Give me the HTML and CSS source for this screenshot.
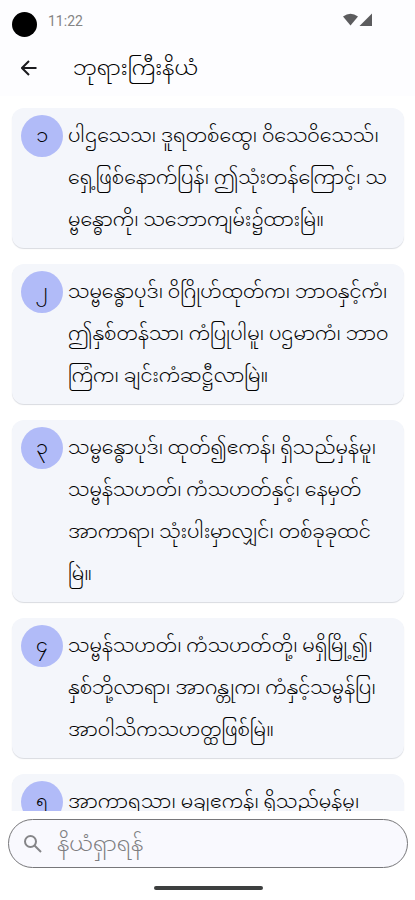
FILE: index.html
```html
<!DOCTYPE html>
<html lang="my">
<head>
<meta charset="utf-8">
<meta name="viewport" content="width=device-width, initial-scale=1">
<title>ဘုရားကြီးနိယံ</title>
<link rel="stylesheet" href="styles.css">
</head>
<body>
<div class="status">
  <span class="camera"></span>
  <span class="clock">11:22</span>
  <svg class="signals" width="30" height="14" viewBox="0 0 30 14" aria-hidden="true"><path d="M0 3.500Q7.500-2 15 3.500L7.500 12.500Z"/><path d="M29 .5V13H16.500Z"/></svg>
</div>
<header class="appbar">
  <button class="back" type="button" aria-label="Back"><svg width="16" height="16" viewBox="0 0 16 16" aria-hidden="true"><path d="M15.500 8H1.500M8 1L1 8l7 7"/></svg></button>
  <h1 class="title">ဘုရားကြီးနိယံ</h1>
</header>
<main class="list">
  <article class="card"><span class="num">၁</span><p class="verse">ပါဌသေသ၊ ဒူရတစ်ထွေ၊ ဝိသေဝိသေသ်၊<br>ရှေ့ဖြစ်နောက်ပြန်၊ ဤသုံးတန်ကြောင့်၊ သ<br>မ္ဗန္ဓောကို၊ သဘောကျမ်း၌ထားမြဲ။</p></article>
  <article class="card"><span class="num">၂</span><p class="verse">သမ္ဗန္ဓောပုဒ်၊ ဝိဂြိုဟ်ထုတ်က၊ ဘာဝနှင့်ကံ၊<br>ဤနှစ်တန်သာ၊ ကံပြုပါမူ၊ ပဌမာကံ၊ ဘာဝ<br>ကြံက၊ ချင်းကံဆဋ္ဌီလာမြဲ။</p></article>
  <article class="card"><span class="num">၃</span><p class="verse">သမ္ဗန္ဓောပုဒ်၊ ထုတ်၍ဧကန်၊ ရှိသည်မှန်မူ၊<br>သမ္ဗန်သဟတ်၊ ကံသဟတ်နှင့်၊ နေမှတ်<br>အာကာရာ၊ သုံးပါးမှာလျှင်၊ တစ်ခုခုထင်<br>မြဲ။</p></article>
  <article class="card"><span class="num">၄</span><p class="verse">သမ္ဗန်သဟတ်၊ ကံသဟတ်တို့၊ မရှိမြို့၍၊<br>နှစ်ဘို့လာရာ၊ အာဂန္တုက၊ ကံနှင့်သမ္ဗန်ပြ၊<br>အာဝါသိကသဟတ္ထဖြစ်မြဲ။</p></article>
  <article class="card"><span class="num">၅</span><p class="verse">အာကာရသာ၊ မချဧကန်၊ ရှိသည်မှန်မူ၊</p></article>
</main>
<footer class="bottom">
  <label class="search">
    <svg width="18" height="18" viewBox="0 0 18 18" aria-hidden="true"><circle cx="6.500" cy="6.500" r="5.500"/><path d="M10.500 10.500L17 17"/></svg>
    <input class="field" type="text" aria-label="နိယံရှာရန်" placeholder="နိယံရှာရန်">
  </label>
  <div class="handle"></div>
</footer>
</body>
</html>
```
FILE: styles.css
```css
* { box-sizing: border-box; }
body {
  margin: 0;
  height: 100vh;
  display: flex;
  flex-direction: column;
  overflow: hidden;
  background: #fff;
  color: #000;
  font-family: Roboto, "Noto Sans Myanmar", "Noto Sans", sans-serif;
  font-weight: 300;
}
.status {
  display: flex;
  align-items: flex-start;
  flex: none;
  height: 40px;
  padding: 12px 42px 0 12px;
  background: #fdfdff;
}
.camera { width: 25px; height: 25px; border-radius: 50%; background: #000; }
.clock { margin-left: 11px; font-size: 14px; font-weight: 400; line-height: 18px; color: #858585; }
.signals { margin: 1px 0 0 auto; fill: #5c5c5e; }
.appbar {
  display: flex;
  align-items: center;
  flex: none;
  height: 56px;
  padding: 0 12px;
  background: #fdfdff;
}
.back {
  display: flex;
  align-items: center;
  justify-content: center;
  width: 34px;
  height: 40px;
  padding: 0;
  border: 0;
  background: none;
}
.back svg { fill: none; stroke: #1b1b1f; stroke-width: 2; }
.title { margin: 0 0 0 27px; font-size: 21px; font-weight: 300; line-height: 40px; white-space: nowrap; }
.list {
  flex: 1;
  min-height: 0;
  display: flex;
  flex-direction: column;
  gap: 16px;
  padding: 12px 11px 0 12px;
  overflow: hidden;
}
.card {
  display: flex;
  flex: none;
  gap: 5px;
  padding: 7px 9px;
  border-radius: 12px;
  background: #f4f6fb;
  box-shadow: 0 1px 1px #d9dbe0;
}
.num {
  display: flex;
  align-items: center;
  justify-content: center;
  flex: none;
  width: 42px;
  height: 42px;
  border-radius: 50%;
  background: #b1bbf8;
  font-size: 19px;
  line-height: 42px;
}
.verse { margin: 0; font-size: 19px; line-height: 42px; white-space: nowrap; }
.bottom { flex: none; padding: 8px 7px 10px 8px; }
.search {
  display: flex;
  align-items: center;
  gap: 15px;
  height: 49px;
  padding: 0 15px;
  border: 1px solid #77777a;
  border-radius: 25px;
  background: #f9f9fe;
}
.search svg { flex: none; fill: none; stroke: #858588; stroke-width: 2; }
.field {
  flex: 1;
  min-width: 0;
  height: 44px;
  padding: 0;
  border: 0;
  outline: 0;
  background: none;
  color: #1b1b1f;
  font-family: inherit;
  font-size: 21px;
  font-weight: 300;
}
.field::placeholder { color: #7d7d80; opacity: 1; }
.handle { width: 109px; height: 4px; margin: 18px auto 0; border-radius: 2px; background: #3d3f3f; }
```
